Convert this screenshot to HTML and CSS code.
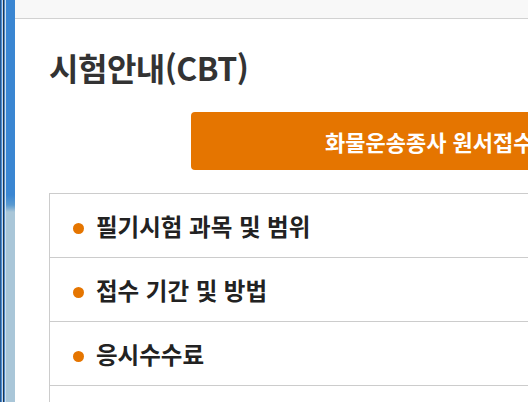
FILE: index.html
```html
<!DOCTYPE html>
<html lang="ko">
<head>
<meta charset="utf-8">
<link rel="stylesheet" href="styles.css">
</head>
<body>
<div class="edge"></div>
<div class="main">
  <div class="topbar"></div>
  <div class="content">
    <h1 class="title">시험안내(CBT)</h1>
    <div class="btn-row">
      <a class="apply-btn">화물운송종사 원서접수 바로가기</a>
    </div>
    <ul class="info-list">
      <li class="info-item"><span class="dot"></span>필기시험 과목 및 범위</li>
      <li class="info-item"><span class="dot"></span>접수 기간 및 방법</li>
      <li class="info-item"><span class="dot"></span>응시수수료</li>
      <li class="info-item"><span class="dot"></span>시험 장소</li>
    </ul>
  </div>
</div>
</body>
</html>
```
FILE: styles.css
```css
html, body {
  margin: 0;
  padding: 0;
  height: 402px;
  overflow: hidden;
  background: #fff;
}
body {
  display: flex;
  font-family: "Noto Sans CJK KR", "Noto Sans", sans-serif;
}
.edge {
  width: 15px;
  flex: none;
  height: 402px;
  background:
    linear-gradient(to right,
      #24558c 0, #24558c 1px,
      #4d8fd6 1px, #4d8fd6 2px,
      #c8d8e8 2px, #c8d8e8 3px,
      #1d3550 3px, #1d3550 4px,
      #4a88c8 4px, #4a88c8 5px,
      #d0e0ee 5px, #d0e0ee 6px,
      transparent 6px),
    linear-gradient(to bottom, #3a86d2 0, #3a86d2 195px, #5a9ad0 205px, #a9c6d8 212px, #a9c6d8 100%);
}
.main {
  flex: 1;
  min-width: 0;
  overflow: hidden;
}
.topbar {
  height: 18px;
  background: #f8f8f8;
  border-bottom: 1px solid #d2d2d2;
}
.content {
  padding-left: 34px;
  width: 600px;
}
.title {
  margin: 0;
  padding-top: 26px;
  font-size: 32px;
  line-height: 44px;
  font-weight: 700;
  color: #333;
  letter-spacing: -0.5px;
}
.btn-row {
  padding-left: 142px;
  margin-top: 23px;
}
.apply-btn {
  display: flex;
  align-items: center;
  box-sizing: border-box;
  width: 460px;
  height: 58px;
  padding-left: 134px;
  background: #e57500;
  border-radius: 4px;
  color: #fff;
  font-size: 22px;
  font-weight: 700;
  white-space: nowrap;
}
.info-list {
  list-style: none;
  margin: 23px 0 0;
  padding: 0;
  border: 1px solid #cccccc;
  border-right: none;
}
.info-item {
  display: flex;
  align-items: center;
  height: 63px;
  border-bottom: 1px solid #cccccc;
  padding-left: 23px;
  font-size: 23.5px;
  font-weight: 700;
  color: #222;
}
.dot {
  width: 11px;
  height: 11px;
  border-radius: 50%;
  background: #e57500;
  margin-right: 12px;
  margin-top: 6px;
}
```
